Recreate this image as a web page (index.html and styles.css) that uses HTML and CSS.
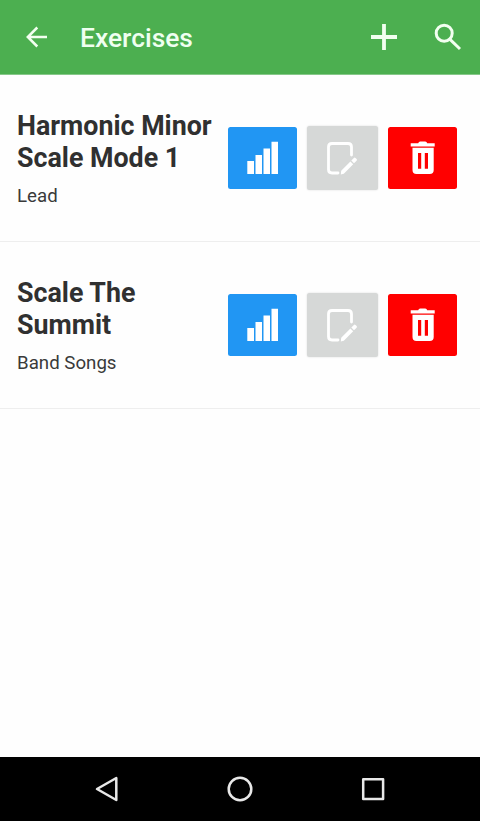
FILE: index.html
```html
<!DOCTYPE html>
<html lang="en">
<head>
<meta charset="utf-8">
<title>Exercises</title>
<link rel="stylesheet" href="styles.css">
</head>
<body>
<svg class="defs" aria-hidden="true">
  <symbol id="bars" viewBox="0 0 70 63"><path fill="#fff" d="M19.3 34h6.7v13h-6.7zM27.5 28h6.5v19h-6.5zM35.5 21.5h6.5v25.5h-6.5zM43.5 14.8h6.5v32.2h-6.5z"/></symbol>
  <symbol id="edit" viewBox="0 0 70 63"><path fill="none" stroke="#fff" stroke-width="2.8" stroke-linecap="round" stroke-linejoin="round" d="M31 46h-6q-3.5 0-3.5-3.5V20q0-3.5 3.5-3.5h16q3.5 0 3.5 3.5v8"/><path fill="#fff" d="M33.8 47.5l.4-3.8 9.2-9.2 2.8 2.8-9.4 9.4zM44.3 33.6l2.6-2.6q.8-.8 1.6 0l1.1 1.1q.8.8 0 1.6l-2.6 2.6z"/></symbol>
  <symbol id="trash" viewBox="0 0 70 63"><path fill="#fff" fill-rule="evenodd" d="M22.7 16.2h7.5q.5-1.7 2-1.7h5q1.5 0 2 1.7h7.5v3.3h-24zM24.5 20.7h21.2v22.2q0 4-4 4H28.5q-4 0-4-4zM30 26v15.7h3.2V26zM36.8 26v15.7H40V26z"/></symbol>
</svg>
<header class="toolbar">
  <svg class="back" viewBox="0 0 24 24"><path d="M22 12H3M12.3 2.5L2.8 12l9.5 9.5"/></svg>
  <h1>Exercises</h1>
  <svg class="add" viewBox="0 0 28 28"><path d="M14 1v26M1 14h26"/></svg>
  <svg class="search" viewBox="0 0 28 28"><circle cx="10.2" cy="10.2" r="8"/><path d="M16 16.4l10 9.6"/></svg>
</header>
<main>
  <article class="row">
    <div class="info"><h2>Harmonic Minor Scale Mode 1</h2><p>Lead</p></div>
    <div class="actions">
      <button class="stats" aria-label="Statistics"><svg><use href="#bars"/></svg></button>
      <button class="edit" aria-label="Edit"><svg><use href="#edit"/></svg></button>
      <button class="delete" aria-label="Delete"><svg><use href="#trash"/></svg></button>
    </div>
  </article>
  <article class="row">
    <div class="info"><h2>Scale The Summit</h2><p>Band Songs</p></div>
    <div class="actions">
      <button class="stats" aria-label="Statistics"><svg><use href="#bars"/></svg></button>
      <button class="edit" aria-label="Edit"><svg><use href="#edit"/></svg></button>
      <button class="delete" aria-label="Delete"><svg><use href="#trash"/></svg></button>
    </div>
  </article>
</main>
<nav class="system">
  <svg viewBox="0 0 28 28"><path d="M4 14L23.3 3v22z"/></svg>
  <svg viewBox="0 0 28 28"><circle cx="14" cy="14" r="11.3"/></svg>
  <svg viewBox="0 0 28 28"><path d="M4.2 4.2h19.9v19.7H4.2z"/></svg>
</nav>
</body>
</html>
```
FILE: styles.css
```css
* { box-sizing: border-box; }
body {
  margin: 0;
  height: 821px;
  display: flex;
  flex-direction: column;
  overflow: hidden;
  background: #fefefe;
  color: #303030;
  font-family: Roboto, sans-serif;
}
.defs { display: none; }
h1, h2, p { margin: 0; }
svg { display: block; flex: none; }
.toolbar {
  height: 75px;
  flex: none;
  display: flex;
  align-items: center;
  padding: 0 18px 0 25px;
  background: #4caf50;
  border-bottom: 1px solid #86c889;
}
.toolbar svg {
  fill: none;
  stroke: #f2fff0;
}
.back { width: 24px; height: 24px; stroke-width: 2.5; }
.toolbar h1 {
  flex: 1;
  margin-left: 31px;
  padding-top: 2px;
  color: #effff0;
  font-size: 26.4px;
  line-height: 32px;
  font-weight: 500;
}
.add { width: 28px; height: 28px; margin-right: 36px; stroke-width: 3.8; }
.search { width: 28px; height: 28px; stroke-width: 3; }
main { flex: 1; }
.row {
  height: 167px;
  display: flex;
  align-items: flex-start;
  padding: 35px 22px 0 17px;
  border-bottom: 1px solid #eee;
}
.info { width: 211px; flex: none; padding-top: 1px; }
.info h2 {
  width: 205px;
  font-size: 26.8px;
  line-height: 31.5px;
  font-weight: 700;
}
.row:nth-child(2) h2 { width: 150px; }
.info p {
  margin-top: 11px;
  font-size: 18.7px;
  line-height: 23px;
  color: #3a3a3a;
}
.actions {
  display: flex;
  gap: 10px;
  padding-top: 17px;
}
.actions button {
  width: 69px;
  height: 62px;
  padding: 0;
  border: 0;
  border-radius: 2.5px;
}
.actions svg { width: 70px; height: 63px; }
.actions .stats { background: #2196f3; }
.actions .edit {
  width: 71px;
  height: 64px;
  margin: -1px 0 0 0;
  background: #d6d8d7;
  box-shadow: 0 0 2px #d8d8d8;
}
.actions .delete { background: #f00; }
.system {
  height: 64px;
  flex: none;
  display: flex;
  justify-content: space-between;
  padding: 18px 93px 0;
  background: #000;
}
.system svg {
  width: 28px;
  height: 28px;
  fill: none;
  stroke: #e8e8e8;
  stroke-width: 2.5;
  stroke-linejoin: round;
}
```
